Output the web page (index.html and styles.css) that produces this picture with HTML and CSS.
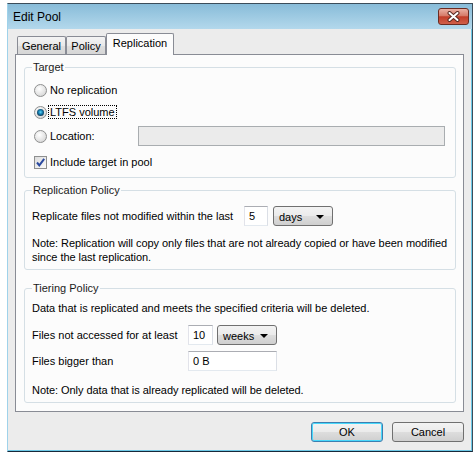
FILE: index.html
```html
<!DOCTYPE html>
<html>

<head>
    <meta charset="utf-8">
    <title>Edit Pool</title>
    <link rel="stylesheet" href="styles.css">
</head>

<body>
    <div class="window">
        <div class="titlebar">
            <span class="title">Edit Pool</span>
            <div class="close">
                <svg width="13" height="11" viewBox="0 0 13 11">
                    <path d="M2.5 2 L10.5 9 M10.5 2 L2.5 9" stroke="#5a2a22" stroke-width="4" stroke-linecap="round" />
                    <path d="M2.5 2 L10.5 9 M10.5 2 L2.5 9" stroke="#ffffff" stroke-width="2" stroke-linecap="round" />
                </svg>
            </div>
        </div>

        <div class="content">
            <div class="tabs">
                <div class="tab tab-general">General</div>
                <div class="tab tab-policy">Policy</div>
                <div class="tab active">Replication</div>
            </div>

            <div class="panel">
                <fieldset class="group target">
                    <legend>Target</legend>
                    <div class="row r1">
                        <span class="radio"></span>
                        <span class="opt">No replication</span>
                    </div>
                    <div class="row r2">
                        <span class="radio checked"></span>
                        <span class="opt focus">LTFS volume</span>
                    </div>
                    <div class="row r3">
                        <span class="radio"></span>
                        <span class="opt loc-label">Location:</span>
                        <div class="field disabled loc-field"></div>
                    </div>
                    <div class="row r4">
                        <span class="check">
                            <svg width="11" height="11" viewBox="0 0 11 11">
                                <path d="M2 5.5 L4.3 8.3 L9.2 1.8" fill="none" stroke="#2b4aa0" stroke-width="2" />
                            </svg>
                        </span>
                        <span class="opt">Include target in pool</span>
                    </div>
                </fieldset>

                <fieldset class="group replication">
                    <legend>Replication Policy</legend>
                    <div class="rep-row">
                        <span>Replicate files not modified within the last</span>
                        <div class="field">5</div>
                        <div class="select"><span>days</span><span class="arrow"></span></div>
                    </div>
                    <p class="note">Note: Replication will copy only files that are not already copied or have been modified<br>since the last replication.</p>
                </fieldset>

                <fieldset class="group tiering">
                    <legend>Tiering Policy</legend>
                    <p class="intro">Data that is replicated and meets the specified criteria will be deleted.</p>
                    <div class="tier-grid">
                        <span>Files not accessed for at least</span>
                        <div class="field">10</div>
                        <div class="select"><span>weeks</span><span class="arrow"></span></div>
                        <span>Files bigger than</span>
                        <div class="field wide">0 B</div>
                    </div>
                    <p class="note tier-note">Note: Only data that is already replicated will be deleted.</p>
                </fieldset>
            </div>

            <div class="buttons">
                <div class="btn default">OK</div>
                <div class="btn">Cancel</div>
            </div>
        </div>
    </div>
</body>

</html>
```

FILE: styles.css
```css
body {
    margin: 0;
    padding: 3px 0 0 7px;
    background: #ffffff;
    font-family: "Liberation Sans", Arial, sans-serif;
    font-size: 11px;
    color: #000;
}

.window {
    width: 466px;
    height: 449px;
    box-sizing: border-box;
    border: 1px solid #3b4d5a;
    border-left-color: #9fd2ea;
    border-bottom-color: #18293a;
    background: #ececec;
    box-shadow: inset -1px -1px 0 #6cc8e6;
    display: flex;
    flex-direction: column;
}

.titlebar {
    height: 25px;
    flex: none;
    display: flex;
    align-items: center;
    justify-content: space-between;
    padding: 0 3px 0 5px;
    background: linear-gradient(#88bcd9, #a2cde4 60%, #b3d8ec);
}

.title {
    font-size: 12px;
}

.close {
    width: 31px;
    height: 17px;
    box-sizing: border-box;
    border: 1px solid #6b2c22;
    border-radius: 3px;
    background: linear-gradient(#eab0a3, #d67a68 45%, #c23d28 52%, #d0604b);
    display: flex;
    align-items: center;
    justify-content: center;
}

.content {
    flex: 1;
    padding: 4px 8px 0 7px;
}

/* tabs */
.tabs {
    display: flex;
    align-items: flex-end;
    height: 21px;
    padding-left: 2px;
}

.tab {
    height: 18px;
    box-sizing: border-box;
    border: 1px solid #898c95;
    border-bottom: none;
    border-radius: 2px 2px 0 0;
    background: linear-gradient(#f4f4f4, #e9e9e9 50%, #dedede 51%, #d6d6d6);
    display: flex;
    align-items: center;
    justify-content: center;
    padding-top: 1px;
}

.tab-general {
    width: 49px;
}

.tab-policy {
    width: 40px;
}

.tab.active {
    width: 68px;
    height: 22px;
    margin-bottom: -1px;
    background: #fcfcfc;
    position: relative;
    z-index: 1;
    padding-top: 0;
    padding-bottom: 3px;
}

.panel {
    height: 358px;
    box-sizing: border-box;
    border: 1px solid #898c95;
    background: #fcfcfc;
    padding: 0 7px 0 8px;
}

/* group boxes */
.group {
    margin: 0;
    border: 1px solid #d5dfe5;
    border-radius: 3px;
    padding: 0 8px 5px 7px;
    min-width: 0;
}

.group legend {
    padding: 0 1px;
    line-height: 13px;
    color: #1b1b1b;
}

.target {
    margin-top: 6px;
}

.replication {
    margin-top: 6px;
}

.tiering {
    margin-top: 12px;
}

.row {
    display: flex;
    align-items: center;
    height: 20px;
}

.r1 {
    margin-top: 6px;
}

.r2 {
    margin-top: 2px;
}

.r3 {
    margin-top: 4px;
}

.r4 {
    margin-top: 6px;
}

.radio {
    width: 13px;
    height: 13px;
    box-sizing: border-box;
    margin-left: 2px;
    border: 1px solid #8e8f8f;
    border-radius: 50%;
    background: radial-gradient(circle at 40% 35%, #ffffff, #e2e2e2 60%, #c9c9c9);
    display: flex;
    align-items: center;
    justify-content: center;
}

.radio.checked::after {
    content: "";
    width: 7px;
    height: 7px;
    border-radius: 50%;
    background: radial-gradient(circle at 50% 45%, #5fd8fa 0, #1b86b8 35%, #0c3452 75%, #091c2c);
}

.check {
    width: 13px;
    height: 13px;
    box-sizing: border-box;
    margin-left: 2px;
    border: 1px solid #8e8f8f;
    background: linear-gradient(135deg, #dcdcdc, #fbfbfb);
    display: flex;
    align-items: center;
    justify-content: center;
}

.opt {
    margin-left: 3px;
}

.focus {
    outline: 1px dotted #000;
    padding: 0 1px;
    margin-left: 2px;
}

.loc-label {
    width: 88px;
}

.field {
    height: 20px;
    box-sizing: border-box;
    border: 1px solid;
    border-color: #abadb3 #dbdfe6 #e3e9ef #e2e3ea;
    background: #fff;
    padding-left: 4px;
    display: flex;
    align-items: center;
}

.field.disabled {
    background: #ebebeb;
    border-color: #a9adb0;
}

.loc-field {
    width: 307px;
}

.select {
    height: 20px;
    box-sizing: border-box;
    width: 60px;
    border: 1px solid #707070;
    border-radius: 3px;
    background: linear-gradient(#f3f3f3, #ebebeb 48%, #dddddd 52%, #cfcfcf);
    display: flex;
    align-items: center;
    justify-content: space-between;
    padding: 1px 8px 0 5px;
}

.arrow {
    width: 0;
    height: 0;
    border-left: 4px solid transparent;
    border-right: 4px solid transparent;
    border-top: 4px solid #000;
}

.rep-row {
    display: grid;
    grid-template-columns: 207px 24px 60px;
    column-gap: 5px;
    align-items: center;
    margin-top: 9px;
}

.note {
    margin: 10px 0 0;
    line-height: 14px;
    white-space: nowrap;
    letter-spacing: -0.05px;
}

.intro {
    margin: 6px 0 0;
    line-height: 14px;
}

.tier-grid {
    display: grid;
    grid-template-columns: 152px 25px 60px;
    column-gap: 4px;
    row-gap: 6px;
    align-items: center;
    margin-top: 10px;
}

.field.wide {
    grid-column: 2 / 4;
}

.tier-note {
    margin-top: 12px;
}

/* dialog buttons */
.buttons {
    display: flex;
    justify-content: flex-end;
    gap: 9px;
    margin-top: 10px;
}

.btn {
    width: 72px;
    height: 20px;
    box-sizing: border-box;
    border: 1px solid #707070;
    border-radius: 3px;
    background: linear-gradient(#f3f3f3, #ebebeb 48%, #dddddd 52%, #cfcfcf);
    display: flex;
    align-items: center;
    justify-content: center;
}

.btn.default {
    border-color: #3c7fb1;
    box-shadow: inset 0 0 0 1px #48d8fb;
}
```
